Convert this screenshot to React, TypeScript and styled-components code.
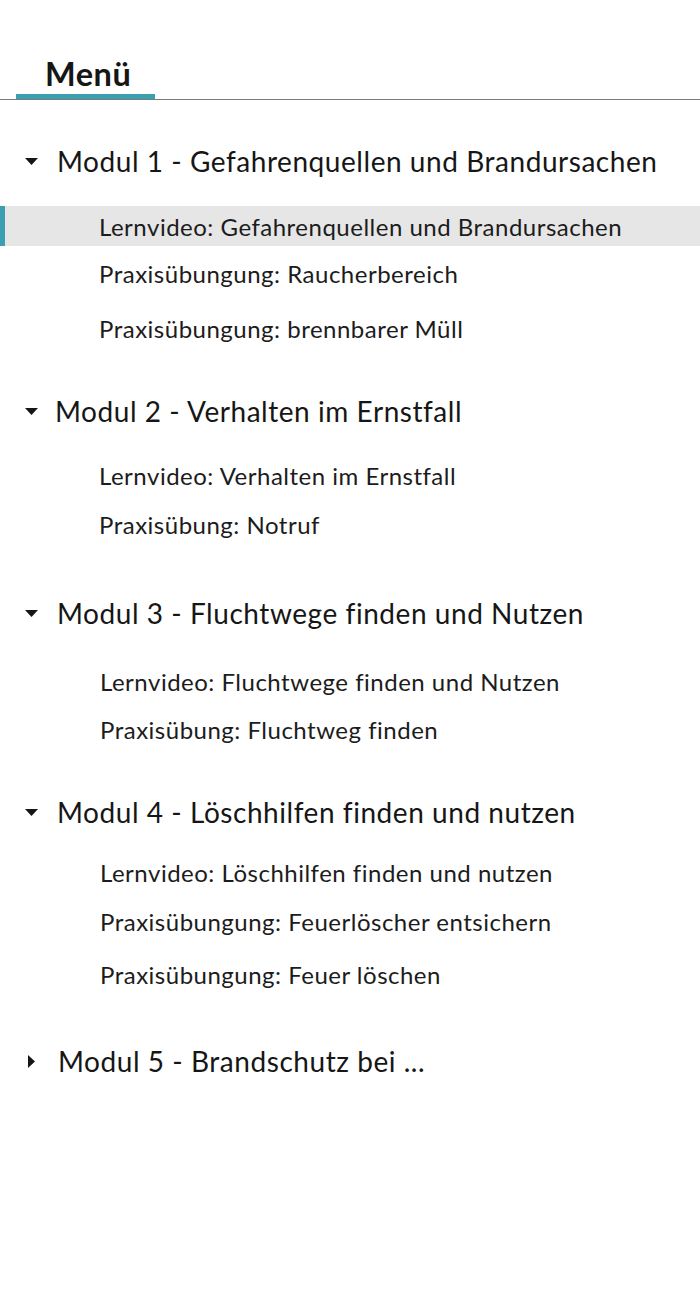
import React from "react";
import styled, { createGlobalStyle } from "styled-components";

const Global = createGlobalStyle`
  html, body { margin: 0; padding: 0; background: #ffffff; }
  body { font-family: Lato, "Noto Sans", sans-serif; color: #1c1c1c; }
`;

const Page = styled.div`
  width: 700px;
  min-height: 1300px;
  background: #ffffff;
`;

const Header = styled.div`
  padding-top: 54px;
  border-bottom: 1px solid #7a7a7a;
`;

const Tab = styled.div`
  margin-left: 16px;
  width: 139px;
  box-sizing: border-box;
  padding-left: 29px;
  border-bottom: 5px solid #3a9fb1;
  font-size: 32.5px;
  font-weight: 700;
  letter-spacing: 0.5px;
  line-height: 40px;
  color: #161616;
`;

const Menu = styled.nav`
  display: flex;
  flex-direction: column;
`;

const ModuleRow = styled.div<{ $gap: number }>`
  display: flex;
  align-items: center;
  height: 44px;
  margin-top: ${(p) => p.$gap}px;
  padding-left: 25px;
  font-size: 28px;
  letter-spacing: 0.55px;
  color: #161616;
  white-space: nowrap;
`;

const Caret = styled.span<{ $indent: number }>`
  display: flex;
  align-items: center;
  justify-content: center;
  width: 13px;
  margin-right: ${(p) => p.$indent}px;
`;

const SubRow = styled.div<{ $gap: number; $active?: boolean; $indent: number }>`
  display: flex;
  align-items: center;
  height: 40px;
  margin-top: ${(p) => p.$gap}px;
  padding-left: ${(p) => p.$indent}px;
  font-size: 24px;
  letter-spacing: 0.5px;
  color: #1c1c1c;
  white-space: nowrap;
  background: ${(p) => (p.$active ? "#e6e6e6" : "transparent")};
  box-shadow: ${(p) => (p.$active ? "inset 5px 0 0 #3a9fb1" : "none")};
`;

type Sub = { label: string; gap: number; active?: boolean; indent?: number };
type Mod = { title: string; gap: number; open: boolean; indent: number; subs: Sub[] };

const modules: Mod[] = [
  {
    title: "Modul 1 - Gefahrenquellen und Brandursachen",
    gap: 39,
    open: true,
    indent: 19,
    subs: [
      { label: "Lernvideo: Gefahrenquellen und Brandursachen", gap: 23, active: true },
      { label: "Praxisübungung: Raucherbereich", gap: 7 },
      { label: "Praxisübungung: brennbarer Müll", gap: 15 },
    ],
  },
  {
    title: "Modul 2 - Verhalten im Ernstfall",
    gap: 41,
    open: true,
    indent: 17,
    subs: [
      { label: "Lernvideo: Verhalten im Ernstfall", gap: 22 },
      { label: "Praxisübung: Notruf", gap: 9 },
    ],
  },
  {
    title: "Modul 3 - Fluchtwege finden und Nutzen",
    gap: 47,
    open: true,
    indent: 19,
    subs: [
      { label: "Lernvideo: Fluchtwege finden und Nutzen", gap: 26, indent: 100 },
      { label: "Praxisübung: Fluchtweg finden", gap: 8, indent: 100 },
    ],
  },
  {
    title: "Modul 4 - Löschhilfen finden und nutzen",
    gap: 41,
    open: true,
    indent: 19,
    subs: [
      { label: "Lernvideo: Löschhilfen finden und nutzen", gap: 18, indent: 100 },
      { label: "Praxisübungung: Feuerlöscher entsichern", gap: 9, indent: 100 },
      { label: "Praxisübungung: Feuer löschen", gap: 13, indent: 100 },
    ],
  },
  {
    title: "Modul 5 - Brandschutz bei ...",
    gap: 45,
    open: false,
    indent: 20,
    subs: [],
  },
];

const CaretDown = () => (
  <svg width="13" height="7" viewBox="0 0 13 7">
    <polygon points="0,0 13,0 6.5,7" fill="#161616" />
  </svg>
);

const CaretRight = () => (
  <svg width="7" height="13" viewBox="0 0 7 13">
    <polygon points="0,0 7,6.5 0,13" fill="#161616" />
  </svg>
);

export default function App() {
  return (
    <Page>
      <Global />
      <Header>
        <Tab>Menü</Tab>
      </Header>
      <Menu>
        {modules.map((m) => (
          <React.Fragment key={m.title}>
            <ModuleRow $gap={m.gap}>
              <Caret $indent={m.indent}>{m.open ? <CaretDown /> : <CaretRight />}</Caret>
              {m.title}
            </ModuleRow>
            {m.subs.map((s) => (
              <SubRow key={s.label} $gap={s.gap} $active={s.active} $indent={s.indent ?? 99}>
                {s.label}
              </SubRow>
            ))}
          </React.Fragment>
        ))}
      </Menu>
    </Page>
  );
}
